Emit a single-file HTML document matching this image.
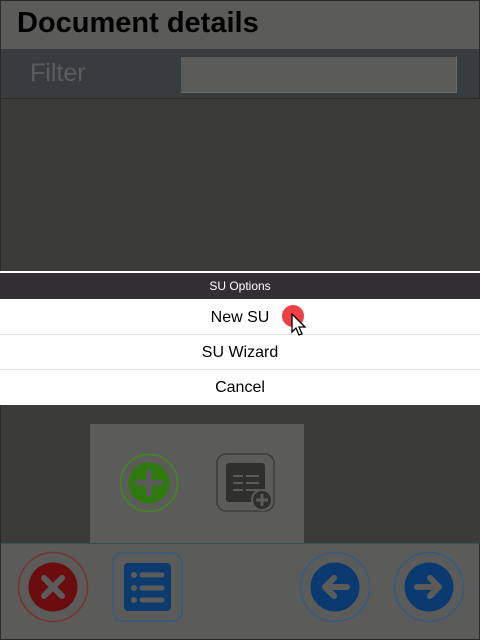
<!DOCTYPE html>
<html><head><style>
*{margin:0;padding:0;box-sizing:border-box}
body{width:480px;height:640px;overflow:hidden;background:#3b3c39;font-family:"Liberation Sans",sans-serif;position:relative}
.abs{position:absolute}
</style></head><body>
<div class="abs" style="left:0;top:0;width:480px;height:640px;border:1px solid #2a2b29"></div>
<div class="abs" style="left:1px;top:1px;width:478px;height:48px;background:#5b5c59"></div>
<div class="abs" style="left:17px;top:7px;font-size:29px;font-weight:bold;color:#000">Document details</div>
<div class="abs" style="left:1px;top:49px;width:478px;height:48px;background:#373d3f"></div>
<div class="abs" style="left:30px;top:59px;font-size:25px;color:#5a5d5b">Filter</div>
<div class="abs" style="left:180px;top:56px;width:277px;height:37px;background:#5b5c59;border:1px solid #3a3b38;border-right-color:#6a6b68;border-bottom-color:#6a6b68"></div>
<div class="abs" style="left:2px;top:98px;width:478px;height:174px;background:#3b3c39;border-top:1px solid #2c2d2b"></div>
<div class="abs" style="left:0;top:271px;width:480px;height:2px;background:#fff"></div>
<div class="abs" style="left:0;top:273px;width:480px;height:26px;background:#322f33;color:#fff;font-size:12px;text-align:center;line-height:27px">SU Options</div>
<div class="abs" style="left:0;top:299px;width:480px;height:106px;background:#fff"></div>
<div class="abs" style="left:0;top:299px;width:480px;height:36px;border-bottom:1px solid #e2e2e2;text-align:center;line-height:37px;font-size:16px;color:#000">New SU</div>
<div class="abs" style="left:0;top:335px;width:480px;height:35px;border-bottom:1px solid #e2e2e2;text-align:center;line-height:36px;font-size:16px;color:#000">SU Wizard</div>
<div class="abs" style="left:0;top:370px;width:480px;height:35px;text-align:center;line-height:36px;font-size:16px;color:#000">Cancel</div>
<div class="abs" style="left:282px;top:305px;width:22px;height:22px;border-radius:50%;background:#ee3f45"></div>
<svg class="abs" style="left:290px;top:313px" width="18" height="26" viewBox="0 0 18 26"><path d="M2 1 L2 19 L6 15 L9 22 L12 21 L9 14 L15 14 Z" fill="#fff" stroke="#000" stroke-width="1.3"/></svg>
<div class="abs" style="left:2px;top:405px;width:478px;height:138px;background:#3b3c39"></div>
<div class="abs" style="left:90px;top:424px;width:214px;height:119px;background:#5b5c59"></div>
<svg class="abs" style="left:0;top:0" width="480" height="640">
<circle cx="149" cy="483" r="28.5" fill="none" stroke="#3d8a1b" stroke-width="1.5"/>
<circle cx="149" cy="483" r="20.5" fill="#2e7a0e"/>
<path d="M149 472v22M138 483h22" stroke="#5b5c59" stroke-width="6" stroke-linecap="round"/>
<rect x="217" y="454" width="57" height="57" rx="9" fill="none" stroke="#3c3d3b" stroke-width="1.5"/>
<rect x="226" y="463" width="39" height="39" rx="3" fill="#2f302e"/>
<path d="M233 476h10M246 476h13M233 483h10M246 483h13M233 490h10M246 490h13" stroke="#5b5c59" stroke-width="2"/>
<circle cx="262" cy="500" r="10" fill="#2f302e" stroke="#5b5c59" stroke-width="2"/>
<path d="M262 494v12M256 500h12" stroke="#5b5c59" stroke-width="3"/>
</svg>
<div class="abs" style="left:1px;top:543px;width:478px;height:96px;background:#5b5c59;border-top:1px solid #3f4a55"></div>
<svg class="abs" style="left:0;top:0" width="480" height="640">
<circle cx="53" cy="587" r="34.5" fill="none" stroke="#7a2f31" stroke-width="1.5"/>
<circle cx="53" cy="587" r="24.5" fill="#6b0d0e"/>
<path d="M44 578l18 18M62 578l-18 18" stroke="#5b5c59" stroke-width="6" stroke-linecap="round"/>
<rect x="113" y="553" width="69" height="68" rx="10" fill="none" stroke="#355a80" stroke-width="1.5"/>
<rect x="124" y="563" width="47" height="48" rx="4" fill="#0d3a6f"/>
<circle cx="134" cy="575" r="3" fill="#5b5c59"/><circle cx="134" cy="588" r="3" fill="#5b5c59"/><circle cx="134" cy="600" r="3" fill="#5b5c59"/>
<path d="M142 575h20M142 588h20M142 600h20" stroke="#5b5c59" stroke-width="5" stroke-linecap="round"/>
<circle cx="335" cy="587" r="34.5" fill="none" stroke="#355a80" stroke-width="1.5"/>
<circle cx="335" cy="587" r="24.5" fill="#0b3a70"/>
<path d="M347 587h-20M334 578l-9 9 9 9" stroke="#5b5c59" stroke-width="6" stroke-linecap="round" stroke-linejoin="round" fill="none"/>
<circle cx="429" cy="587" r="34.5" fill="none" stroke="#355a80" stroke-width="1.5"/>
<circle cx="429" cy="587" r="24.5" fill="#0b3a70"/>
<path d="M417 587h20M430 578l9 9-9 9" stroke="#5b5c59" stroke-width="6" stroke-linecap="round" stroke-linejoin="round" fill="none"/>
</svg>
</body></html>
